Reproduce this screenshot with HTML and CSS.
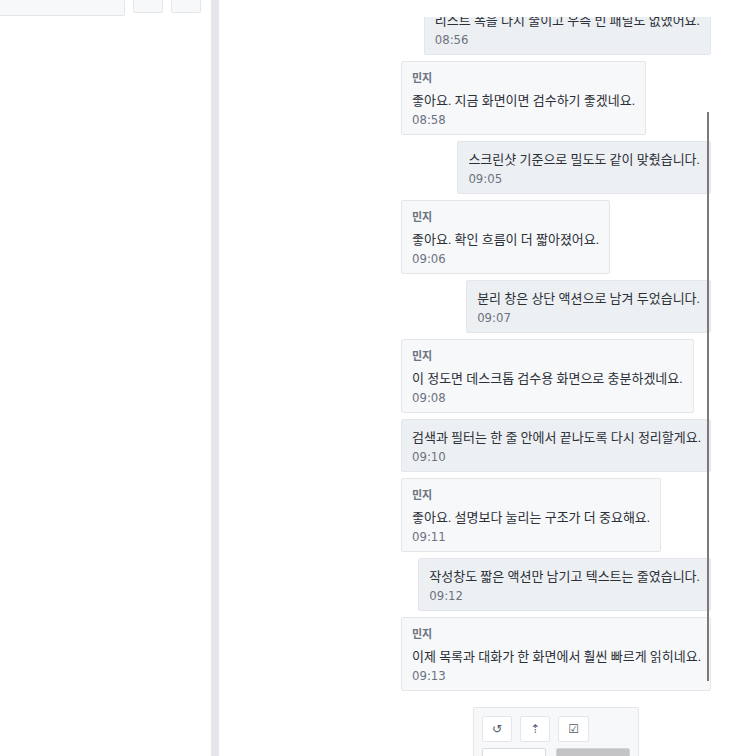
FILE: index.html
```html
<!DOCTYPE html>
<html lang="ko">
<head>
    <meta charset="UTF-8">
    <meta name="viewport" content="width=device-width, initial-scale=1.0">
    <title>대화</title>
    <link rel="stylesheet" href="styles.css">
</head>
<body>

    <div class="app">
        <aside class="sidebar">
            <div class="toolbar">
                <input type="text" class="search" aria-label="검색">
                <button type="button" class="tool-btn" aria-label="필터"></button>
                <button type="button" class="tool-btn" aria-label="새 대화"></button>
            </div>
        </aside>

        <main class="chat">
            <div class="messages">
                <div class="message mine">
                    <p>리스트 폭을 다시 줄이고 우측 빈 패널도 없앴어요.</p>
                    <time>08:56</time>
                </div>
                <div class="message">
                    <strong>민지</strong>
                    <p>좋아요. 지금 화면이면 검수하기 좋겠네요.</p>
                    <time>08:58</time>
                </div>
                <div class="message mine">
                    <p>스크린샷 기준으로 밀도도 같이 맞췄습니다.</p>
                    <time>09:05</time>
                </div>
                <div class="message">
                    <strong>민지</strong>
                    <p>좋아요. 확인 흐름이 더 짧아졌어요.</p>
                    <time>09:06</time>
                </div>
                <div class="message mine">
                    <p>분리 창은 상단 액션으로 남겨 두었습니다.</p>
                    <time>09:07</time>
                </div>
                <div class="message">
                    <strong>민지</strong>
                    <p>이 정도면 데스크톱 검수용 화면으로 충분하겠네요.</p>
                    <time>09:08</time>
                </div>
                <div class="message mine">
                    <p>검색과 필터는 한 줄 안에서 끝나도록 다시 정리할게요.</p>
                    <time>09:10</time>
                </div>
                <div class="message">
                    <strong>민지</strong>
                    <p>좋아요. 설명보다 눌리는 구조가 더 중요해요.</p>
                    <time>09:11</time>
                </div>
                <div class="message mine">
                    <p>작성창도 짧은 액션만 남기고 텍스트는 줄였습니다.</p>
                    <time>09:12</time>
                </div>
                <div class="message">
                    <strong>민지</strong>
                    <p>이제 목록과 대화가 한 화면에서 훨씬 빠르게 읽히네요.</p>
                    <time>09:13</time>
                </div>
                <div class="scroll-thumb"></div>
            </div>

            <form class="composer">
                <div class="composer-tools">
                    <button type="button" aria-label="새로고침">↺</button>
                    <button type="button" aria-label="올리기">⇡</button>
                    <button type="button" aria-label="할 일">☑</button>
                </div>
                <div class="composer-row">
                    <input type="text" aria-label="메시지">
                    <button type="submit" class="send" aria-label="보내기" disabled></button>
                </div>
            </form>
        </main>
    </div>

</body>
</html>
```

FILE: styles.css
```css
* {
    box-sizing: border-box;
}

body {
    margin: 0;
    font-family: Roboto, "Noto Sans CJK KR", sans-serif;
    font-size: 13px;
    color: #2b2f36;
    background-color: #ffffff;
}

button,
input {
    font-family: inherit;
    margin: 0;
    padding: 0;
}

.app {
    display: flex;
    height: 100vh;
    overflow: hidden;
}

/* Left pane */
.sidebar {
    flex: 0 0 219px;
    min-width: 0;
    border-right: 8px solid #e5e6eb;
}

.toolbar {
    display: flex;
    align-items: flex-start;
    gap: 8px;
    padding-right: 10px;
}

.search {
    flex: 1;
    min-width: 0;
    height: 16px;
    background-color: #f7f8fa;
    border: 1px solid #e5e6eb;
    border-top: none;
    border-left: none;
    border-radius: 0 0 2px 0;
}

.tool-btn {
    width: 30px;
    height: 13px;
    background-color: #f7f8fa;
    border: 1px solid #e5e6eb;
    border-top: none;
    border-radius: 0 0 2px 2px;
}

/* Conversation */
.chat {
    flex: 1;
    min-width: 0;
    display: flex;
    flex-direction: column;
    align-items: flex-end;
    gap: 16px;
    padding: 17px 26px 0 0;
}

.messages {
    position: relative;
    flex: 1;
    min-height: 0;
    width: 310px;
    display: flex;
    flex-direction: column;
    justify-content: flex-end;
    align-items: flex-start;
    gap: 6px;
    overflow: hidden;
}

.message {
    flex-shrink: 0;
    max-width: 100%;
    padding: 8px 10px;
    background-color: #f7f8fa;
    border: 1px solid #e5e6eb;
    border-radius: 2px;
    white-space: nowrap;
}

.message.mine {
    align-self: flex-end;
    background-color: #edf0f3;
}

.message strong {
    display: block;
    margin-bottom: 4px;
    font-size: 11px;
    line-height: 17px;
    color: #6b7280;
}

.message p {
    margin: 0;
    line-height: 20px;
}

.message time {
    display: block;
    margin-top: 2px;
    font-family: "DejaVu Sans Condensed", "DejaVu Sans", sans-serif;
    font-size: 13px;
    line-height: 13px;
    color: #6b7280;
}

.scroll-thumb {
    position: absolute;
    top: 95px;
    right: 2px;
    bottom: 10px;
    width: 2px;
    background-color: #7a7a7a;
}

/* Composer */
.composer {
    flex: 0 0 49px;
    width: 166px;
    margin-right: 72px;
    padding: 8px 8px 0;
    background-color: #f7f8fa;
    border: 1px solid #e5e6eb;
    border-bottom: none;
    border-radius: 2px 2px 0 0;
    overflow: hidden;
}

.composer-tools {
    display: flex;
    gap: 8px;
    margin-bottom: 6px;
}

.composer-tools button {
    min-width: 30px;
    height: 26px;
    padding: 0 9px;
    font-family: "DejaVu Sans", sans-serif;
    font-size: 12px;
    color: #4e5969;
    background-color: #ffffff;
    border: 1px solid #e5e6eb;
    border-radius: 2px;
}

.composer-row {
    display: flex;
    gap: 10px;
}

.composer-row input {
    flex: 1;
    min-width: 0;
    height: 30px;
    background-color: #ffffff;
    border: 1px solid #d9dce3;
    border-radius: 2px;
}

.send {
    width: 74px;
    height: 30px;
    background-color: #c4c4c6;
    border: 1px solid #d4d5d8;
    border-radius: 2px;
}
```
